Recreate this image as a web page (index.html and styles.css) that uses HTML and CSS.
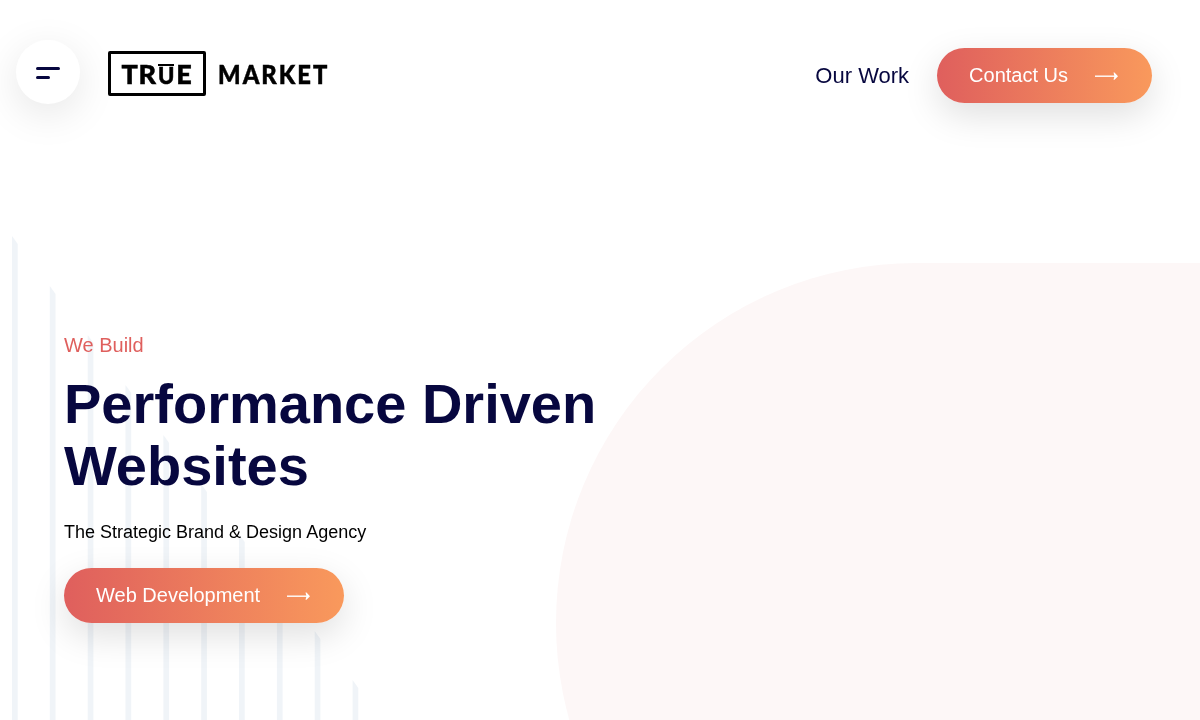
FILE: index.html
```html
<!DOCTYPE html>
<html lang="en">
<head>
<meta charset="utf-8">
<title>True Market</title>
<link rel="stylesheet" href="styles.css">
</head>
<body>
<div class="page">
  <div class="blob"></div>
  <svg class="bars" width="370" height="490" viewBox="0 0 370 490">
    <polygon points="12,6 17.7,14 17.7,490 12,490"/>
    <polygon points="49.8,56 55.5,64 55.5,490 49.8,490"/>
    <polygon points="87.7,105 93.4,113 93.4,490 87.7,490"/>
    <polygon points="125.5,155 131.2,163 131.2,490 125.5,490"/>
    <polygon points="163.4,205 169.1,213 169.1,490 163.4,490"/>
    <polygon points="201.2,254 206.9,262 206.9,490 201.2,490"/>
    <polygon points="239,304 244.7,312 244.7,490 239,490"/>
    <polygon points="276.9,353 282.6,361 282.6,490 276.9,490"/>
    <polygon points="314.7,401 320.4,409 320.4,490 314.7,490"/>
    <polygon points="352.6,450 358.3,458 358.3,490 352.6,490"/>
  </svg>
  <header class="header">
    <button class="menu" aria-label="Menu"><span class="menu-long"></span><span class="menu-short"></span></button>
    <a class="logo">
      <span class="logo-box"><span>TR</span><span class="logo-u">U</span><span>E</span></span>
      <span class="logo-word">MARKET</span>
    </a>
    <nav class="nav">
      <a class="nav-link">Our Work</a>
      <a class="btn">Contact Us
        <svg class="arrow" width="24" height="10" viewBox="0 0 24 10"><path d="M0 5.2H21" stroke="#fff" stroke-width="1.4" fill="none"/><path d="M18.5 1.6L19.5 1.6L23 5.2L19.5 8.8L18.5 8.8L19.5 5.2Z" fill="#fff"/></svg>
      </a>
    </nav>
  </header>
  <main class="hero">
    <p class="eyebrow">We Build</p>
    <h1 class="title">Performance Driven<br>Websites</h1>
    <p class="sub">The Strategic Brand &amp; Design Agency</p>
    <a class="btn">Web Development
      <svg class="arrow" width="24" height="10" viewBox="0 0 24 10"><path d="M0 5.2H21" stroke="#fff" stroke-width="1.4" fill="none"/><path d="M18.5 1.6L19.5 1.6L23 5.2L19.5 8.8L18.5 8.8L19.5 5.2Z" fill="#fff"/></svg>
    </a>
  </main>
</div>
</body>
</html>
```
FILE: styles.css
```css
* { box-sizing: border-box; }
html, body { margin: 0; padding: 0; }
body {
  background: #fff;
  font-family: "Liberation Sans", Arial, sans-serif;
  color: #000;
}
.page {
  position: relative;
  width: 1200px;
  height: 720px;
  overflow: hidden;
}
.blob {
  position: absolute;
  left: 556px;
  top: 263px;
  width: 1000px;
  height: 720px;
  border-radius: 360px;
  background: #fdf7f7;
}
.bars {
  position: absolute;
  left: 0;
  top: 230px;
  display: block;
}
.bars polygon { fill: #f0f4f8; }
.header {
  position: relative;
  display: flex;
  align-items: flex-start;
  padding: 40px 48px 0 16px;
  will-change: transform;
}
.menu {
  width: 64px;
  height: 64px;
  border: 0;
  padding: 2px 20px 0;
  border-radius: 50%;
  background: #fff;
  box-shadow: 0 10px 40px rgba(0, 0, 0, 0.1);
  display: flex;
  flex-direction: column;
  align-items: flex-start;
  justify-content: center;
  gap: 6px;
}
.menu-long, .menu-short {
  display: block;
  height: 3px;
  border-radius: 2px;
  background: #07073f;
}
.menu-long { width: 24px; }
.menu-short { width: 14px; }
.logo {
  display: flex;
  align-items: center;
  margin: 11px 0 0 28px;
  color: #000;
  font-family: Lato, "Liberation Sans", sans-serif;
  font-weight: 900;
  -webkit-text-stroke: 0.5px #000;
}
.logo-box {
  display: flex;
  align-items: center;
  justify-content: center;
  width: 98px;
  height: 45px;
  border: 3px solid #000;
  border-radius: 2px;
  font-size: 27px;
  line-height: 1;
  letter-spacing: 0.8px;
}
.logo-u {
  position: relative;
  display: flex;
  align-items: flex-end;
  height: 20px;
  font-size: 22px;
  line-height: 16px;
  padding: 0 1px;
}
.logo-u::before {
  content: "";
  position: absolute;
  left: 1px;
  right: 2px;
  top: 0;
  height: 2px;
  background: #000;
}
.logo-word {
  margin-left: 12px;
  font-size: 27px;
  line-height: 1;
  letter-spacing: 2.3px;
  transform: scaleX(0.88);
  transform-origin: left center;
}
.nav {
  display: flex;
  align-items: center;
  gap: 28px;
  margin: 8px 0 0 auto;
}
.nav-link {
  font-size: 22px;
  color: #07073f;
}
.btn {
  display: inline-flex;
  align-items: center;
  height: 55px;
  padding: 0 33px 0 32px;
  gap: 27px;
  border-radius: 28px;
  background: linear-gradient(90deg, #df5f5d 0%, #f9995c 100%);
  box-shadow: 0 12px 36px rgba(0, 0, 0, 0.13);
  color: #fff;
  font-size: 20px;
  white-space: nowrap;
}
.arrow { display: block; margin-top: 1px; }
.hero {
  position: relative;
  padding: 229px 0 0 64px;
  will-change: transform;
}
.eyebrow {
  margin: 0;
  font-size: 20px;
  line-height: 24px;
  color: #df5f5d;
}
.title {
  margin: 16px 0 0;
  font-size: 56px;
  line-height: 62px;
  font-weight: 700;
  color: #07073f;
}
.sub {
  margin: 23px 0 0;
  font-size: 18px;
  line-height: 24px;
}
.hero .btn { margin-top: 24px; }
```
